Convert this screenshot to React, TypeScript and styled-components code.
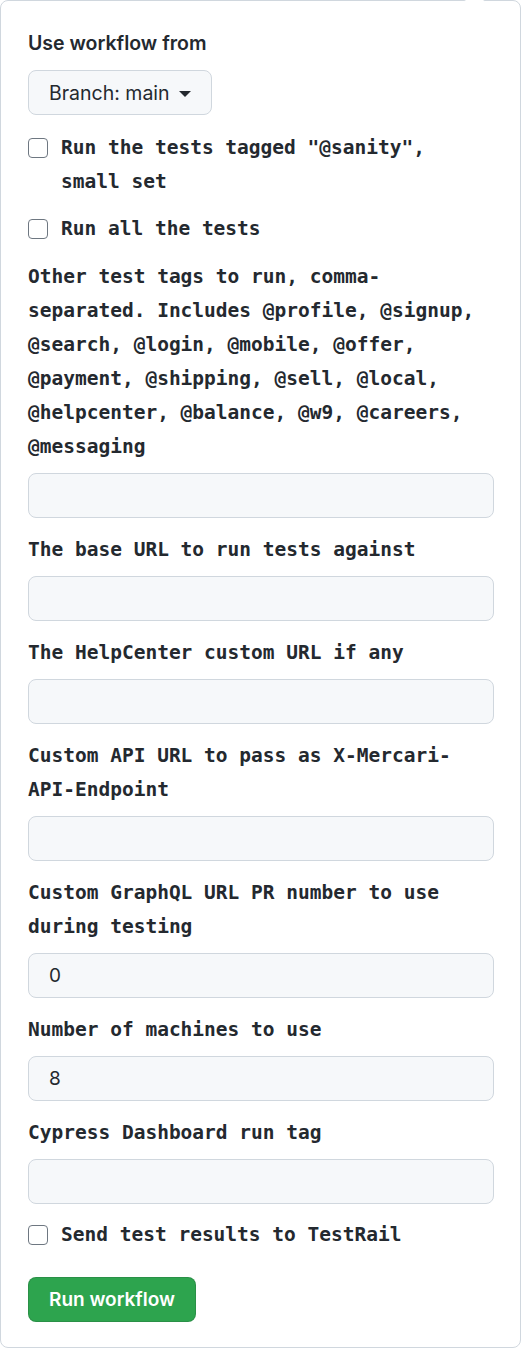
import React from "react";
import styled, { createGlobalStyle } from "styled-components";

const GlobalStyle = createGlobalStyle`
  html, body { margin: 0; padding: 0; background: #ffffff; }
  body { overflow: hidden; }
`;

const SANS = `Inter, "Liberation Sans", Arial, sans-serif`;
const MONO = `"DejaVu Sans Mono", "Liberation Mono", monospace`;

const Panel = styled.div`
  position: relative;
  box-sizing: border-box;
  width: 521px;
  border: 1px solid #d0d7de;
  border-radius: 8px;
  padding: 27px 26px 25px 27px;
  display: flex;
  flex-direction: column;
  align-items: stretch;
  background: #ffffff;
  color: #24292f;

  &::before {
    content: "";
    position: absolute;
    top: -8px;
    left: 466px;
    width: 15px;
    height: 15px;
    box-sizing: border-box;
    background: #ffffff;
    border-top: 1px solid #d0d7de;
    border-left: 1px solid #d0d7de;
    transform: rotate(45deg);
  }
`;

const Heading = styled.div`
  font-family: ${SANS};
  font-size: 19.5px;
  font-weight: 600;
  line-height: 30px;
`;

const BranchButton = styled.button`
  align-self: flex-start;
  margin-top: 12px;
  height: 45px;
  box-sizing: border-box;
  padding: 0 20px;
  display: flex;
  align-items: center;
  gap: 9px;
  background: #f6f8fa;
  border: 1px solid #d0d7de;
  border-radius: 8px;
  font-family: ${SANS};
  font-size: 19.5px;
  color: #24292f;
`;

const Caret = styled.span`
  width: 0;
  height: 0;
  border-left: 6px solid transparent;
  border-right: 6px solid transparent;
  border-top: 6px solid #24292f;
  margin-top: 2px;
`;

const CheckRow = styled.label<{ $gap: number }>`
  margin-top: ${(p) => p.$gap}px;
  display: grid;
  grid-template-columns: 20px 1fr;
  column-gap: 13px;
  align-items: start;
  font-family: ${MONO};
  font-weight: 700;
  font-size: 19.5px;
  line-height: 34px;
`;

const Box = styled.span`
  margin-top: 7px;
  width: 20px;
  height: 20px;
  box-sizing: border-box;
  border: 1.5px solid #6e7781;
  border-radius: 4px;
  background: #ffffff;
`;

const Field = styled.div<{ $first?: boolean }>`
  margin-top: ${(p) => (p.$first ? 14 : 15)}px;
  display: flex;
  flex-direction: column;
  gap: 9px;
`;

const Label = styled.label`
  font-family: ${MONO};
  font-weight: 700;
  font-size: 19.5px;
  line-height: 34px;
`;

const TextInput = styled.input`
  width: 100%;
  height: 45px;
  box-sizing: border-box;
  margin: 0;
  padding: 0 20px;
  background: #f6f8fa;
  border: 1px solid #d0d7de;
  border-radius: 8px;
  font-family: ${SANS};
  font-size: 19px;
  color: #24292f;
  outline: none;
`;

const RunButton = styled.button`
  align-self: flex-start;
  margin-top: 25px;
  height: 45px;
  box-sizing: border-box;
  padding: 0 20px;
  background: #2da44e;
  border: 1px solid rgba(27, 31, 36, 0.15);
  border-radius: 8px;
  color: #ffffff;
  font-family: ${SANS};
  font-size: 19px;
  font-weight: 600;
`;

const fields: { label: string; value: string }[] = [
  {
    label:
      "Other test tags to run, comma-separated. Includes @profile, @signup, @search, @login, @mobile, @offer, @payment, @shipping, @sell, @local, @helpcenter, @balance, @w9, @careers, @messaging",
    value: "",
  },
  { label: "The base URL to run tests against", value: "" },
  { label: "The HelpCenter custom URL if any", value: "" },
  { label: "Custom API URL to pass as X-Mercari-API-Endpoint", value: "" },
  { label: "Custom GraphQL URL PR number to use during testing", value: "0" },
  { label: "Number of machines to use", value: "8" },
  { label: "Cypress Dashboard run tag", value: "" },
];

export default function App() {
  return (
    <>
      <GlobalStyle />
      <Panel>
        <Heading>Use workflow from</Heading>
        <BranchButton type="button">
          Branch: main
          <Caret />
        </BranchButton>
        <CheckRow $gap={16}>
          <Box />
          <span>Run the tests tagged "@sanity", small set</span>
        </CheckRow>
        <CheckRow $gap={13}>
          <Box />
          <span>Run all the tests</span>
        </CheckRow>
        {fields.map((f, i) => (
          <Field key={f.label} $first={i === 0}>
            <Label>{f.label}</Label>
            <TextInput readOnly value={f.value} />
          </Field>
        ))}
        <CheckRow $gap={14}>
          <Box />
          <span>Send test results to TestRail</span>
        </CheckRow>
        <RunButton type="button">Run workflow</RunButton>
      </Panel>
    </>
  );
}
